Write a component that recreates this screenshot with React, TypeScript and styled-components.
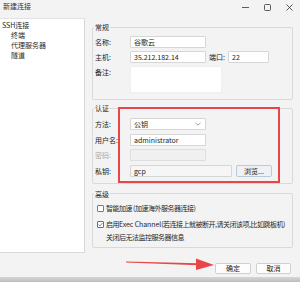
import React from "react";
import styled, { createGlobalStyle } from "styled-components";

const GlobalStyle = createGlobalStyle`
  html, body {
    margin: 0;
    padding: 0;
    background: #f3f3f3;
  }
  body {
    font-family: "Noto Sans CJK SC", "Noto Sans", sans-serif;
  }
`;

const Window = styled.div`
  position: relative;
  width: 300px;
  height: 282px;
  background: #f3f3f3;
  display: flex;
  flex-direction: column;
  overflow: hidden;
  font-size: 7px;
  color: #1f1f1f;
`;

const TitleBar = styled.div`
  height: 18px;
  flex-shrink: 0;
  display: flex;
  justify-content: space-between;
  align-items: flex-start;
  box-sizing: border-box;
  padding-left: 3px;
`;

const Title = styled.div`
  padding-top: 2px;
  line-height: 9px;
  color: #333;
`;

const Controls = styled.div`
  display: flex;
`;

const ControlButton = styled.div`
  width: 22px;
  height: 14px;
  display: flex;
  align-items: center;
  justify-content: center;
`;

const Main = styled.div`
  display: flex;
  height: 235px;
  flex-shrink: 0;
`;

const Tree = styled.div`
  width: 85px;
  flex-shrink: 0;
  box-sizing: border-box;
  background: #ffffff;
  border-top: 1px solid #e2e2e2;
  border-right: 1px solid #d8d8d8;
  border-bottom: 1px solid #d8d8d8;
  padding-top: 1px;
`;

const TreeItem = styled.div<{ $indent?: number }>`
  height: 10px;
  line-height: 10px;
  padding-left: ${(p) => p.$indent ?? 2}px;
  white-space: nowrap;
`;

const RightPane = styled.div`
  flex: 1;
  min-width: 0;
  display: flex;
  flex-direction: column;
  padding: 4px 7px 0 7px;
`;

const Group = styled.fieldset<{ $top?: number; $pt: number; $pb: number }>`
  margin: ${(p) => p.$top ?? 0}px 0 0 0;
  padding: ${(p) => p.$pt}px 2px ${(p) => p.$pb}px 2px;
  border: 1px solid #d9d9d9;
  border-radius: 2px;
  min-width: 0;
`;

const Legend = styled.legend`
  padding: 0 1px;
  margin-left: -1px;
  font-size: 7px;
  line-height: 10px;
  color: #2a2a2a;
`;

const Rows = styled.div<{ $gap: number }>`
  display: flex;
  flex-direction: column;
  gap: ${(p) => p.$gap}px;
`;

const Row = styled.div<{ $top?: boolean }>`
  display: flex;
  align-items: ${(p) => (p.$top ? "flex-start" : "center")};
  gap: 3px;
`;

const Label = styled.div<{ $width?: number; $disabled?: boolean; $top?: number }>`
  width: ${(p) => p.$width ?? 32}px;
  flex-shrink: 0;
  line-height: 10px;
  padding-top: ${(p) => p.$top ?? 0}px;
  color: ${(p) => (p.$disabled ? "#a8a8a8" : "#222")};
  white-space: nowrap;
`;

const Field = styled.div<{ $width: number; $height?: number; $variant?: "plain" | "disabled" | "muted" | "area" }>`
  position: relative;
  width: ${(p) => p.$width}px;
  height: ${(p) => p.$height ?? 12}px;
  box-sizing: border-box;
  padding-left: 3px;
  line-height: 10px;
  color: #222;
  background: ${(p) =>
    p.$variant === "disabled" ? "#f0f0f0" : p.$variant === "muted" ? "#f6f6f6" : "#ffffff"};
  border: 1px solid
    ${(p) => (p.$variant === "area" ? "#efefef" : p.$variant === "disabled" ? "#dedede" : "#d6d6d6")};
  border-radius: 1px;
  white-space: nowrap;
`;

const Chevron = styled.svg`
  position: absolute;
  right: 4px;
  top: 3px;
`;

const BrowseButton = styled.div`
  width: 36px;
  height: 12px;
  box-sizing: border-box;
  margin-left: 1px;
  border: 1px solid #bcc9d8;
  border-radius: 2px;
  background: #eef2f7;
  line-height: 10px;
  text-align: center;
  color: #222;
`;

const CheckRow = styled.div<{ $indent?: number; $mt?: number }>`
  display: flex;
  align-items: center;
  gap: 2px;
  height: 12px;
  margin-top: ${(p) => p.$mt ?? 0}px;
  padding-left: ${(p) => p.$indent ?? 2}px;
  line-height: 12px;
  white-space: nowrap;
  overflow: hidden;
  letter-spacing: -0.5px;
`;

const Latin = styled.span`
  letter-spacing: -0.1px;
`;

const Box = styled.div<{ $checked?: boolean }>`
  width: 7px;
  height: 7px;
  box-sizing: border-box;
  border: 1px solid ${(p) => (p.$checked ? "#2f7ad0" : "#7a7a7a")};
  border-radius: 1px;
  background: #fff;
  display: flex;
  align-items: center;
  justify-content: center;
  flex-shrink: 0;
`;

const Footer = styled.div`
  height: 24px;
  flex-shrink: 0;
  display: flex;
  justify-content: flex-end;
  gap: 5px;
  box-sizing: border-box;
  padding: 10px 9px 0 0;
`;

const Button = styled.div<{ $width: number }>`
  width: ${(p) => p.$width}px;
  height: 11px;
  box-sizing: border-box;
  border: 1px solid #d0d0d0;
  border-radius: 2px;
  background: #fdfdfd;
  line-height: 9px;
  text-align: center;
  color: #222;
`;

const BottomEdge = styled.div`
  height: 5px;
  flex-shrink: 0;
  background: linear-gradient(#d6d6d6, #bdbdbd);
`;

const Highlight = styled.div`
  position: absolute;
  left: 118px;
  top: 107px;
  width: 162px;
  height: 76px;
  box-sizing: border-box;
  border: 2px solid #e8474a;
`;

const ArrowLayer = styled.svg`
  position: absolute;
  left: 0;
  top: 0;
  pointer-events: none;
`;

export default function App() {
  return (
    <>
      <GlobalStyle />
      <Window>
        <TitleBar>
          <Title>新建连接</Title>
          <Controls>
            <ControlButton>
              <svg width="7" height="7" viewBox="0 0 7 7">
                <line x1="0" y1="3.5" x2="7" y2="3.5" stroke="#333" strokeWidth="0.8" />
              </svg>
            </ControlButton>
            <ControlButton>
              <svg width="7" height="7" viewBox="0 0 7 7">
                <rect x="0.5" y="0.5" width="6" height="6" rx="1" fill="none" stroke="#333" strokeWidth="0.8" />
              </svg>
            </ControlButton>
            <ControlButton>
              <svg width="7" height="7" viewBox="0 0 7 7">
                <path d="M0.5 0.5 L6.5 6.5 M6.5 0.5 L0.5 6.5" stroke="#333" strokeWidth="0.8" />
              </svg>
            </ControlButton>
          </Controls>
        </TitleBar>

        <Main>
          <Tree>
            <TreeItem $indent={2}>SSH连接</TreeItem>
            <TreeItem $indent={11}>终端</TreeItem>
            <TreeItem $indent={11}>代理服务器</TreeItem>
            <TreeItem $indent={11}>隧道</TreeItem>
          </Tree>

          <RightPane>
            <Group $pt={4} $pb={6}>
              <Legend>常规</Legend>
              <Rows $gap={3}>
                <Row>
                  <Label>名称:</Label>
                  <Field $width={76}>谷歌云</Field>
                </Row>
                <Row>
                  <Label>主机:</Label>
                  <Field $width={76}>35.212.182.14</Field>
                  <Label $width={16}>端口:</Label>
                  <Field $width={41}>22</Field>
                </Row>
                <Row $top>
                  <Label $top={1}>备注:</Label>
                  <Field $width={92} $height={27} $variant="area" />
                </Row>
              </Rows>
            </Group>

            <Group $top={3} $pt={5} $pb={6}>
              <Legend>认证</Legend>
              <Rows $gap={3.67}>
                <Row>
                  <Label>方法:</Label>
                  <Field $width={76}>
                    公钥
                    <Chevron width="6" height="4" viewBox="0 0 6 4">
                      <path d="M0.5 0.8 L3 3.2 L5.5 0.8" fill="none" stroke="#777" strokeWidth="0.7" />
                    </Chevron>
                  </Field>
                </Row>
                <Row>
                  <Label>用户名:</Label>
                  <Field $width={76}>administrator</Field>
                </Row>
                <Row>
                  <Label $disabled>密码:</Label>
                  <Field $width={76} $variant="disabled" />
                </Row>
                <Row>
                  <Label>私钥:</Label>
                  <Field $width={102} $variant="muted">gcp</Field>
                  <BrowseButton>浏览...</BrowseButton>
                </Row>
              </Rows>
            </Group>

            <Group $top={5} $pt={3.5} $pb={4}>
              <Legend>高级</Legend>
              <Rows $gap={0}>
                <CheckRow>
                  <Box />
                  智能加速 (加速海外服务器连接)
                </CheckRow>
                <CheckRow $mt={4}>
                  <Box $checked>
                    <svg width="5" height="5" viewBox="0 0 5 5">
                      <path d="M0.6 2.6 L2 4 L4.5 0.9" fill="none" stroke="#2f7ad0" strokeWidth="0.8" />
                    </svg>
                  </Box>
                  <span>
                    启用<Latin>Exec Channel</Latin>(若连接上就被断开,请关闭该项,比如跳板机)
                  </span>
                </CheckRow>
                <CheckRow $indent={11} $mt={1}>
                  关闭后无法监控服务器信息
                </CheckRow>
              </Rows>
            </Group>
          </RightPane>
        </Main>

        <Footer>
          <Button $width={36}>确定</Button>
          <Button $width={35}>取消</Button>
        </Footer>
        <BottomEdge />

        <Highlight />
        <ArrowLayer width="300" height="282" viewBox="0 0 300 282">
          <path d="M126 261.6 L198 263.2 L198 265.2 L126 262.4 Z" fill="#e8474a" />
          <path d="M196 258.5 L214 265 L196 270 Z" fill="#e8474a" />
        </ArrowLayer>
      </Window>
    </>
  );
}
